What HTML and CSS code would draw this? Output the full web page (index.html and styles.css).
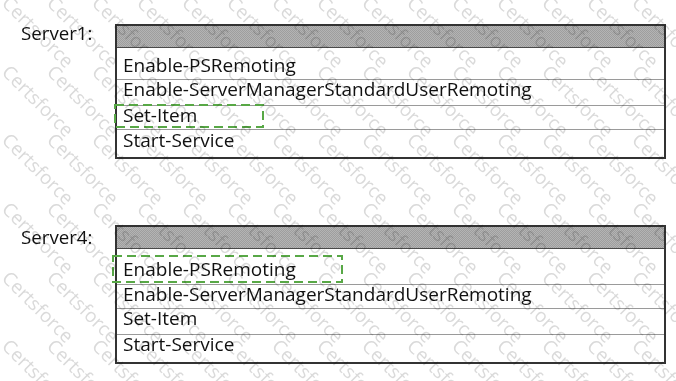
FILE: index.html
```html
<!DOCTYPE html>
<html lang="en">
<head>
<meta charset="utf-8">
<title>Server cmdlets</title>
<link rel="stylesheet" href="styles.css">
</head>
<body>
<main class="page">
  <section class="server server--one">
    <div class="label">Server1:</div>
    <div class="table">
      <div class="thead"></div>
      <div class="row">Enable-PSRemoting</div>
      <div class="row">Enable-ServerManagerStandardUserRemoting</div>
      <div class="row">Set-Item</div>
      <div class="row">Start-Service</div>
      <svg class="mark mark--one" width="150" height="24" viewBox="0 0 150 24"><rect x="1" y="1" width="148" height="22" fill="none" stroke="#58a846" stroke-width="2" stroke-dasharray="9 5"/></svg>
    </div>
  </section>
  <section class="server server--two">
    <div class="label">Server4:</div>
    <div class="table">
      <div class="thead"></div>
      <div class="row">Enable-PSRemoting</div>
      <div class="row">Enable-ServerManagerStandardUserRemoting</div>
      <div class="row">Set-Item</div>
      <div class="row">Start-Service</div>
      <svg class="mark mark--two" width="231" height="28" viewBox="0 0 231 28"><rect x="1" y="1" width="229" height="26" fill="none" stroke="#58a846" stroke-width="2" stroke-dasharray="9 5"/></svg>
    </div>
  </section>
</main>
<div class="watermark" aria-hidden="true">
  <div class="wm-grid">
    <span>Certsforce</span><span>Certsforce</span><span>Certsforce</span><span>Certsforce</span><span>Certsforce</span><span>Certsforce</span><span>Certsforce</span><span>Certsforce</span><span>Certsforce</span><span>Certsforce</span><span>Certsforce</span><span>Certsforce</span><span>Certsforce</span><span>Certsforce</span><span>Certsforce</span>
    <span>Certsforce</span><span>Certsforce</span><span>Certsforce</span><span>Certsforce</span><span>Certsforce</span><span>Certsforce</span><span>Certsforce</span><span>Certsforce</span><span>Certsforce</span><span>Certsforce</span><span>Certsforce</span><span>Certsforce</span><span>Certsforce</span><span>Certsforce</span><span>Certsforce</span>
    <span>Certsforce</span><span>Certsforce</span><span>Certsforce</span><span>Certsforce</span><span>Certsforce</span><span>Certsforce</span><span>Certsforce</span><span>Certsforce</span><span>Certsforce</span><span>Certsforce</span><span>Certsforce</span><span>Certsforce</span><span>Certsforce</span><span>Certsforce</span><span>Certsforce</span>
    <span>Certsforce</span><span>Certsforce</span><span>Certsforce</span><span>Certsforce</span><span>Certsforce</span><span>Certsforce</span><span>Certsforce</span><span>Certsforce</span><span>Certsforce</span><span>Certsforce</span><span>Certsforce</span><span>Certsforce</span><span>Certsforce</span><span>Certsforce</span><span>Certsforce</span>
    <span>Certsforce</span><span>Certsforce</span><span>Certsforce</span><span>Certsforce</span><span>Certsforce</span><span>Certsforce</span><span>Certsforce</span><span>Certsforce</span><span>Certsforce</span><span>Certsforce</span><span>Certsforce</span><span>Certsforce</span><span>Certsforce</span><span>Certsforce</span><span>Certsforce</span>
    <span>Certsforce</span><span>Certsforce</span><span>Certsforce</span><span>Certsforce</span><span>Certsforce</span><span>Certsforce</span><span>Certsforce</span><span>Certsforce</span><span>Certsforce</span><span>Certsforce</span><span>Certsforce</span><span>Certsforce</span><span>Certsforce</span><span>Certsforce</span><span>Certsforce</span>
  </div>
</div>
</body>
</html>
```
FILE: styles.css
```css
html, body {
  margin: 0;
  padding: 0;
  background: #ffffff;
}
body {
  position: relative;
  width: 676px;
  height: 381px;
  overflow: hidden;
  font-family: "Open Sans", "Noto Sans", sans-serif;
  color: #111111;
}
.page {
  padding: 24px 0 0 21px;
}
.server {
  display: flex;
  align-items: flex-start;
}
.server--two {
  margin-top: 66px;
}
.label {
  width: 94px;
  flex: none;
  font-size: 18.7px;
  line-height: 18px;
  white-space: nowrap;
}
.server--two .label {
  padding-top: 3px;
}
.table {
  position: relative;
  width: 551px;
  box-sizing: border-box;
  border: 2px solid #333333;
  background: #ffffff;
}
.thead {
  height: 21px;
  border-bottom: 1px solid #4a4a4a;
  background: repeating-conic-gradient(#9e9e9e 0 25%, #b4b4b4 0 50%) 0 0 / 2px 2px;
}
.row {
  box-sizing: border-box;
  padding-left: 6px;
  font-size: 19px;
  line-height: 18px;
  white-space: nowrap;
  border-top: 1px solid #9a9a9a;
}
.row:nth-child(2) {
  border-top: none;
}
.server--one .row:nth-child(2) { height: 31px; padding-top: 8px; }
.server--one .row:nth-child(3) { height: 26px; }
.server--one .row:nth-child(4) { height: 24px; }
.server--one .row:nth-child(5) { height: 28px; padding-top: 1px; }
.server--two .row:nth-child(2) { height: 35px; padding-top: 11px; }
.server--two .row:nth-child(3) { height: 24px; }
.server--two .row:nth-child(4) { height: 26px; }
.server--two .row:nth-child(5) { height: 28px; }
.mark {
  position: absolute;
  display: block;
}
.mark--one {
  left: -3px;
  top: 78px;
}
.mark--two {
  left: -5px;
  top: 28px;
}
.watermark {
  position: absolute;
  left: 0;
  top: 0;
  width: 676px;
  height: 381px;
  overflow: hidden;
  pointer-events: none;
  mix-blend-mode: multiply;
}
.wm-grid {
  display: grid;
  grid-template-columns: repeat(15, 45px);
  grid-auto-rows: 68.7px;
  margin-left: 12px;
  margin-top: -7px;
}
.wm-grid span {
  display: block;
  transform: rotate(45deg);
  transform-origin: 0 0;
  white-space: nowrap;
  font-size: 19px;
  line-height: 19px;
  color: #dadada;
}
```
